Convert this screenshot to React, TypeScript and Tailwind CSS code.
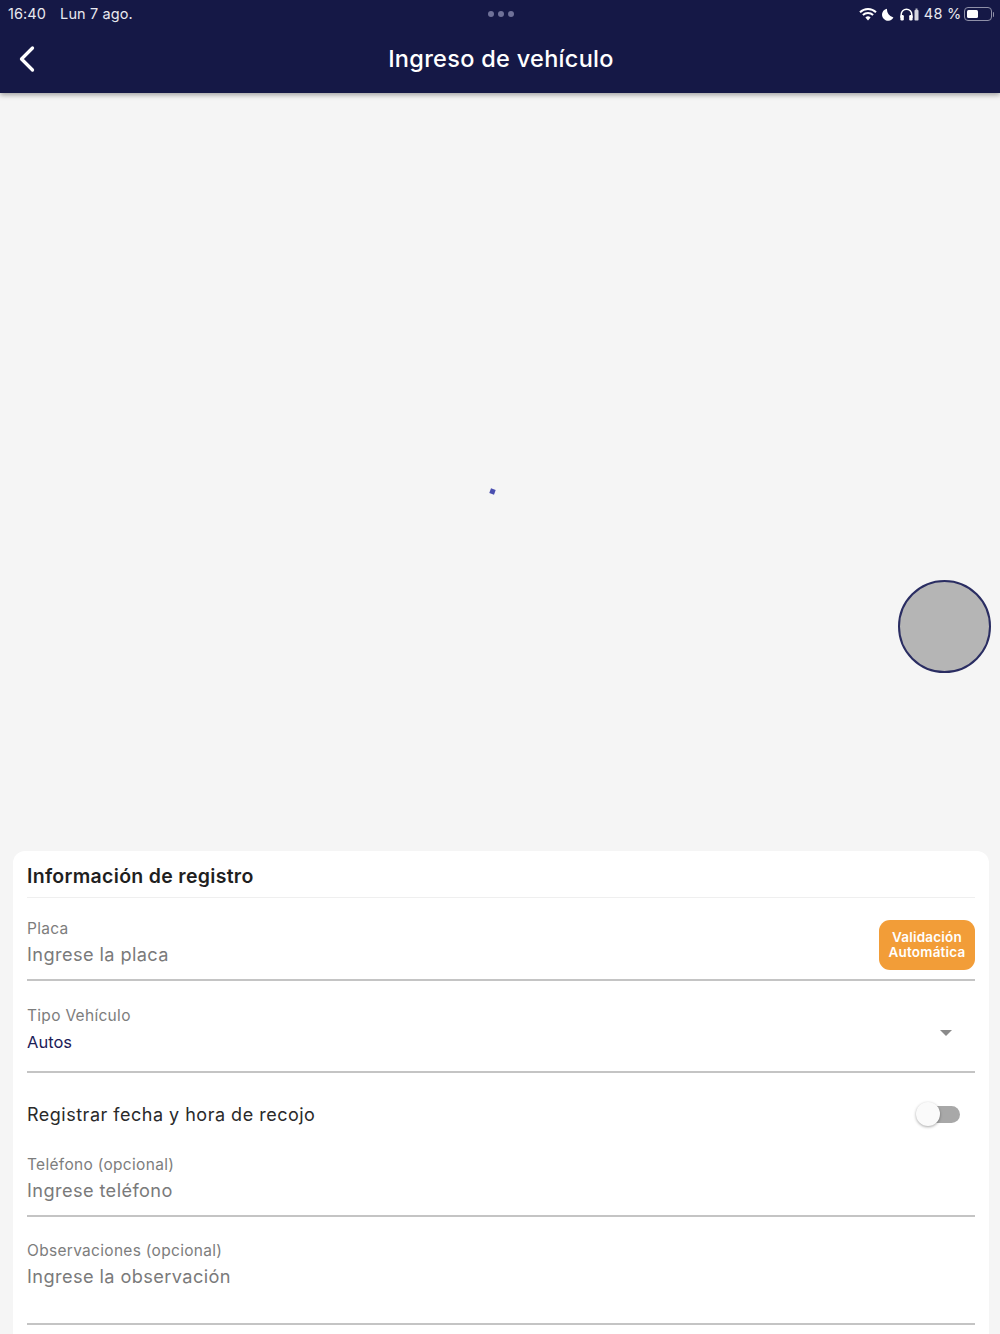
import { ChevronLeft } from "lucide-react";

const StatusIcons = () => (
    <div className="flex items-center">
        {/* wifi */}
        <svg width="18" height="14" viewBox="0 0 18 14" fill="none">
            <path d="M1 5.2a11.4 11.4 0 0 1 16 0" stroke="white" strokeWidth="2" />
            <path d="M3.9 8a7.3 7.3 0 0 1 10.2 0" stroke="white" strokeWidth="2" />
            <path d="M9 13.4 6.4 10.6a3.7 3.7 0 0 1 5.2 0z" fill="white" />
        </svg>
        {/* moon */}
        <svg width="12" height="13" viewBox="0 0 12 13" className="ml-[5px]">
            <path d="M5 .8a6 6 0 1 0 6.4 8.6A8 8 0 0 1 5 .8z" fill="white" />
        </svg>
        {/* headphones + battery */}
        <svg width="13" height="13" viewBox="0 0 13 13" fill="none" className="ml-[6px]">
            <path d="M1.2 10V6.5a5.3 5.3 0 0 1 10.6 0V10" stroke="white" strokeWidth="1.5" />
            <rect x="0.4" y="7" width="3.4" height="5.4" rx="1.2" fill="white" />
            <rect x="9.2" y="7" width="3.4" height="5.4" rx="1.2" fill="white" />
        </svg>
        <svg width="5" height="13" viewBox="0 0 5 13" className="ml-[1px]">
            <rect x="1.5" y="0.5" width="2" height="1.5" fill="#b9bac8" />
            <rect x="0.5" y="2" width="4" height="10.5" rx="0.8" fill="#d5d6e0" />
        </svg>
    </div>
);

const Battery = () => (
    <div className="flex items-center ml-[2px]">
        <div className="w-[28px] h-[14px] rounded-[4px] border border-[#8f90a8] p-[2px]">
            <div className="w-[11px] h-full rounded-[1.5px] bg-white" />
        </div>
        <div className="w-[1.5px] h-[5px] ml-[1px] rounded-r-sm bg-[#8f90a8]" />
    </div>
);

const TextField = ({ label, placeholder }: { label: string; placeholder: string }) => (
    <div>
        <div className="text-[15.5px] leading-[20px] text-[#7d7d7d] tracking-[0.3px]">{label}</div>
        <div className="mt-[3px] text-[18.2px] leading-[24px] text-[#7a7a7a] tracking-[0.4px]">{placeholder}</div>
    </div>
);

export default function App() {
    return (
        <div className="w-[1000px] h-[1334px] overflow-hidden flex flex-col bg-[#f5f5f5] font-['Inter',sans-serif]">
            <header className="relative z-10 h-[93px] shrink-0 bg-[#151846] shadow-[0_2px_5px_rgba(0,0,0,0.35)]">
                <div className="h-[28px] pl-[8px] pr-[6px] flex items-center justify-between text-white">
                    <div className="flex items-center text-[14.5px] leading-none text-[#e9e9ef] tracking-[0.1px]">
                        <span>16:40</span>
                        <span className="ml-[14px]">Lun 7 ago.</span>
                    </div>
                    <div className="flex gap-[4px] absolute left-[488px] top-[11px]">
                        <div className="size-[6px] rounded-full bg-[#6f7198]" />
                        <div className="size-[6px] rounded-full bg-[#6f7198]" />
                        <div className="size-[6px] rounded-full bg-[#6f7198]" />
                    </div>
                    <div className="flex items-center">
                        <StatusIcons />
                        <span className="ml-[5px] text-[14.5px] leading-none text-[#e9e9ef] tracking-[0.25px]">48 %</span>
                        <Battery />
                    </div>
                </div>
                <div className="relative h-[65px] flex items-center justify-center">
                    <ChevronLeft className="absolute left-[5px] top-[9px] text-white" size={44} strokeWidth={1.8} />
                    <h1 className="text-[23.5px] leading-[30px] font-medium text-white tracking-[0.3px] -mt-[3px] ml-[2px]">Ingreso de vehículo</h1>
                </div>
            </header>

            <main className="relative flex-1 flex flex-col">
                {/* camera area */}
                <div className="relative h-[758px] shrink-0">
                    <div className="absolute left-[490px] top-[396px] size-[5px] rotate-[20deg] bg-[#4a4fb0]" />
                    <div className="absolute left-[898px] top-[487px] size-[93px] rounded-full bg-[#b5b5b5] border-2 border-[#2a2d62]" />
                </div>

                <section className="ml-[13px] mr-[11px] flex-1 rounded-t-[12px] bg-white px-[14px]">
                    <div className="h-[47px] border-b border-[#efefef] flex items-center">
                        <h2 className="text-[19.5px] font-semibold text-[#1f1f1f] tracking-[0.3px] mt-[6px]">Información de registro</h2>
                    </div>

                    <div className="h-[83px] border-b-2 border-[#c4c4c4] flex items-start justify-between">
                        <div className="pt-[21px]">
                            <TextField label="Placa" placeholder="Ingrese la placa" />
                        </div>
                        <div className="mt-[22px] w-[96px] h-[50px] rounded-[11px] bg-[#f29d38] flex items-center justify-center text-center text-[13.5px] leading-[15px] font-semibold text-white tracking-[0.2px]">
                            <span>Validación<br />Automática</span>
                        </div>
                    </div>

                    <div className="h-[92px] border-b-2 border-[#c4c4c4] flex items-start justify-between">
                        <div className="pt-[25px]">
                            <div className="text-[15.5px] leading-[20px] text-[#7d7d7d] tracking-[0.3px]">Tipo Vehículo</div>
                            <div className="mt-[6px] text-[16.5px] leading-[20px] text-[#1d2058]">Autos</div>
                        </div>
                        <div className="mt-[49px] mr-[23px] w-0 h-0 border-x-[6px] border-x-transparent border-t-[6px] border-t-[#8a8a8a]" />
                    </div>

                    <div className="h-[82px] flex items-center justify-between">
                        <span className="mt-[1px] text-[18px] leading-[24px] text-[#2a2a2a] tracking-[0.5px]">Registrar fecha y hora de recojo</span>
                        <div className="relative mr-[15px] w-[32px] h-[17px] rounded-full bg-[#a8a8a8]">
                            <div className="absolute left-[-12px] -top-[4px] size-[24px] rounded-full bg-[#fafafa] shadow-[0_1px_3px_rgba(0,0,0,0.35)]" />
                        </div>
                    </div>

                    <div className="h-[62px] border-b-2 border-[#c4c4c4]">
                        <TextField label="Teléfono (opcional)" placeholder="Ingrese teléfono" />
                    </div>

                    <div className="h-[108px] border-b-2 border-[#c4c4c4] pt-[24px]">
                        <TextField label="Observaciones (opcional)" placeholder="Ingrese la observación" />
                    </div>
                </section>
            </main>
        </div>
    );
}
